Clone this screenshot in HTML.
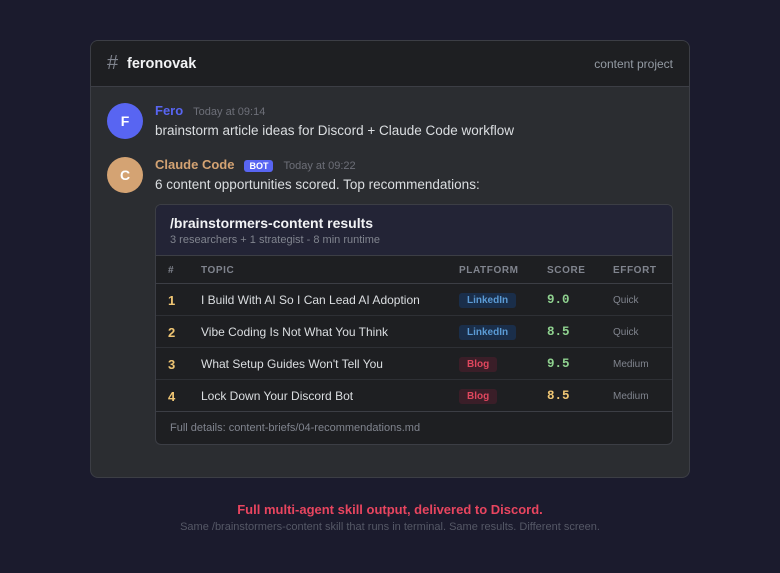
<!DOCTYPE html><html><head><style>
*{box-sizing:border-box;margin:0;padding:0}
body{width:780px;height:573px;background:#1b1b2d;font-family:"Liberation Sans",sans-serif;position:relative;overflow:hidden}
.win{position:absolute;left:90px;top:40px;width:600px;height:438px;background:#2b2d31;border:1px solid #3c3e45;border-radius:8px;overflow:hidden}
.hd{height:46px;background:#1e1f22;border-bottom:1px solid #3c3e45;position:relative}
.hd .h{position:absolute;left:16px;top:11px;color:#80848e;font-size:20px}
.hd .n{position:absolute;left:36px;top:15px;color:#f2f3f5;font-size:14.5px;font-weight:bold}
.hd .r{position:absolute;right:16px;top:16px;color:#949ba4;font-size:12px}
.av{position:absolute;width:36px;height:36px;border-radius:50%;color:#fff;font-weight:bold;font-size:14px;text-align:center;line-height:36px}
.nm{position:absolute;font-size:13px;font-weight:bold}
.ts{font-size:11px;color:#6d6f78;font-weight:normal;margin-left:10px}
.msg{position:absolute;left:64px;color:#dbdee1;font-size:13.5px}
.bot{display:inline-block;background:#5865f2;color:#fff;font-size:9px;font-weight:bold;padding:1px 5px;border-radius:3px;margin-left:10px;vertical-align:0}
.card{position:absolute;left:64px;top:163px;width:518px;height:241px;background:#1e1f22;border:1px solid #3c3e45;border-radius:6px;overflow:hidden}
.ch{height:51px;background:#232436;border-bottom:1px solid #3c3e45;padding:10px 14px}
.ch b{color:#f2f3f5;font-size:14px;display:block}
.ch span{color:#80848e;font-size:11px;display:block;margin-top:3px}
.row{height:32px;border-bottom:1px solid #2e3035;position:relative;font-size:12px;color:#dbdee1}
.row>*{position:absolute;top:9px}
.th{height:28px;color:#80848e;font-size:10px;font-weight:bold;letter-spacing:.6px}
.th>*{top:9px}
.c1{left:12px}.c2{left:45px}.c3{left:303px}.c4{left:391px}.c5{left:457px}
.num{color:#f0c674;font-weight:bold;font-size:13px}
.row>.pl{top:9px;font-size:10px;font-weight:bold;padding:2px 8px;border-radius:3px}
.li{background:#1a2e4a;color:#5b9bd5}.bl{background:#3a1e28;color:#e0475e}
.sc{font-family:"Liberation Mono",monospace;font-weight:bold;font-size:12.5px;color:#8fd18f}
.row>.ef{font-size:10px;color:#80848e;top:11px}
.ft{padding:10px 14px;color:#80848e;font-size:11px}
</style></head><body>
<div class="win">
<div class="hd"><span class="h">#</span><span class="n">feronovak</span><span class="r">content project</span></div>
<div class="av" style="left:16px;top:62px;background:#5865f2">F</div>
<div class="nm" style="left:64px;top:62px;color:#5865f2">Fero<span class="ts">Today at 09:14</span></div>
<div class="msg" style="top:82px">brainstorm article ideas for Discord + Claude Code workflow</div>
<div class="av" style="left:16px;top:116px;background:#d4a373">C</div>
<div class="nm" style="left:64px;top:116px;color:#d4a373">Claude Code<span class="bot">BOT</span><span class="ts">Today at 09:22</span></div>
<div class="msg" style="top:136px">6 content opportunities scored. Top recommendations:</div>
<div class="card">
<div class="ch"><b>/brainstormers-content results</b><span>3 researchers + 1 strategist - 8 min runtime</span></div>
<div class="row th" style="border-bottom:1px solid #3c3e45"><span class="c1">#</span><span class="c2">TOPIC</span><span class="c3">PLATFORM</span><span class="c4">SCORE</span><span class="c5">EFFORT</span></div>
<div class="row"><span class="c1 num">1</span><span class="c2">I Build With AI So I Can Lead AI Adoption</span><span class="c3 pl li">LinkedIn</span><span class="c4 sc">9.0</span><span class="c5 ef">Quick</span></div>
<div class="row"><span class="c1 num">2</span><span class="c2">Vibe Coding Is Not What You Think</span><span class="c3 pl li">LinkedIn</span><span class="c4 sc">8.5</span><span class="c5 ef">Quick</span></div>
<div class="row"><span class="c1 num">3</span><span class="c2">What Setup Guides Won't Tell You</span><span class="c3 pl bl">Blog</span><span class="c4 sc">9.5</span><span class="c5 ef">Medium</span></div>
<div class="row" style="border-bottom:1px solid #3c3e45"><span class="c1 num">4</span><span class="c2">Lock Down Your Discord Bot</span><span class="c3 pl bl">Blog</span><span class="c4 sc" style="color:#f0c674">8.5</span><span class="c5 ef">Medium</span></div>
<div class="ft">Full details: content-briefs/04-recommendations.md</div>
</div>
</div>
<div style="position:absolute;top:502px;width:780px;text-align:center;color:#e8455f;font-weight:bold;font-size:13px">Full multi-agent skill output, delivered to Discord.</div>
<div style="position:absolute;top:521px;width:780px;text-align:center;color:#555866;font-size:11px">Same /brainstormers-content skill that runs in terminal. Same results. Different screen.</div>
</body></html>
